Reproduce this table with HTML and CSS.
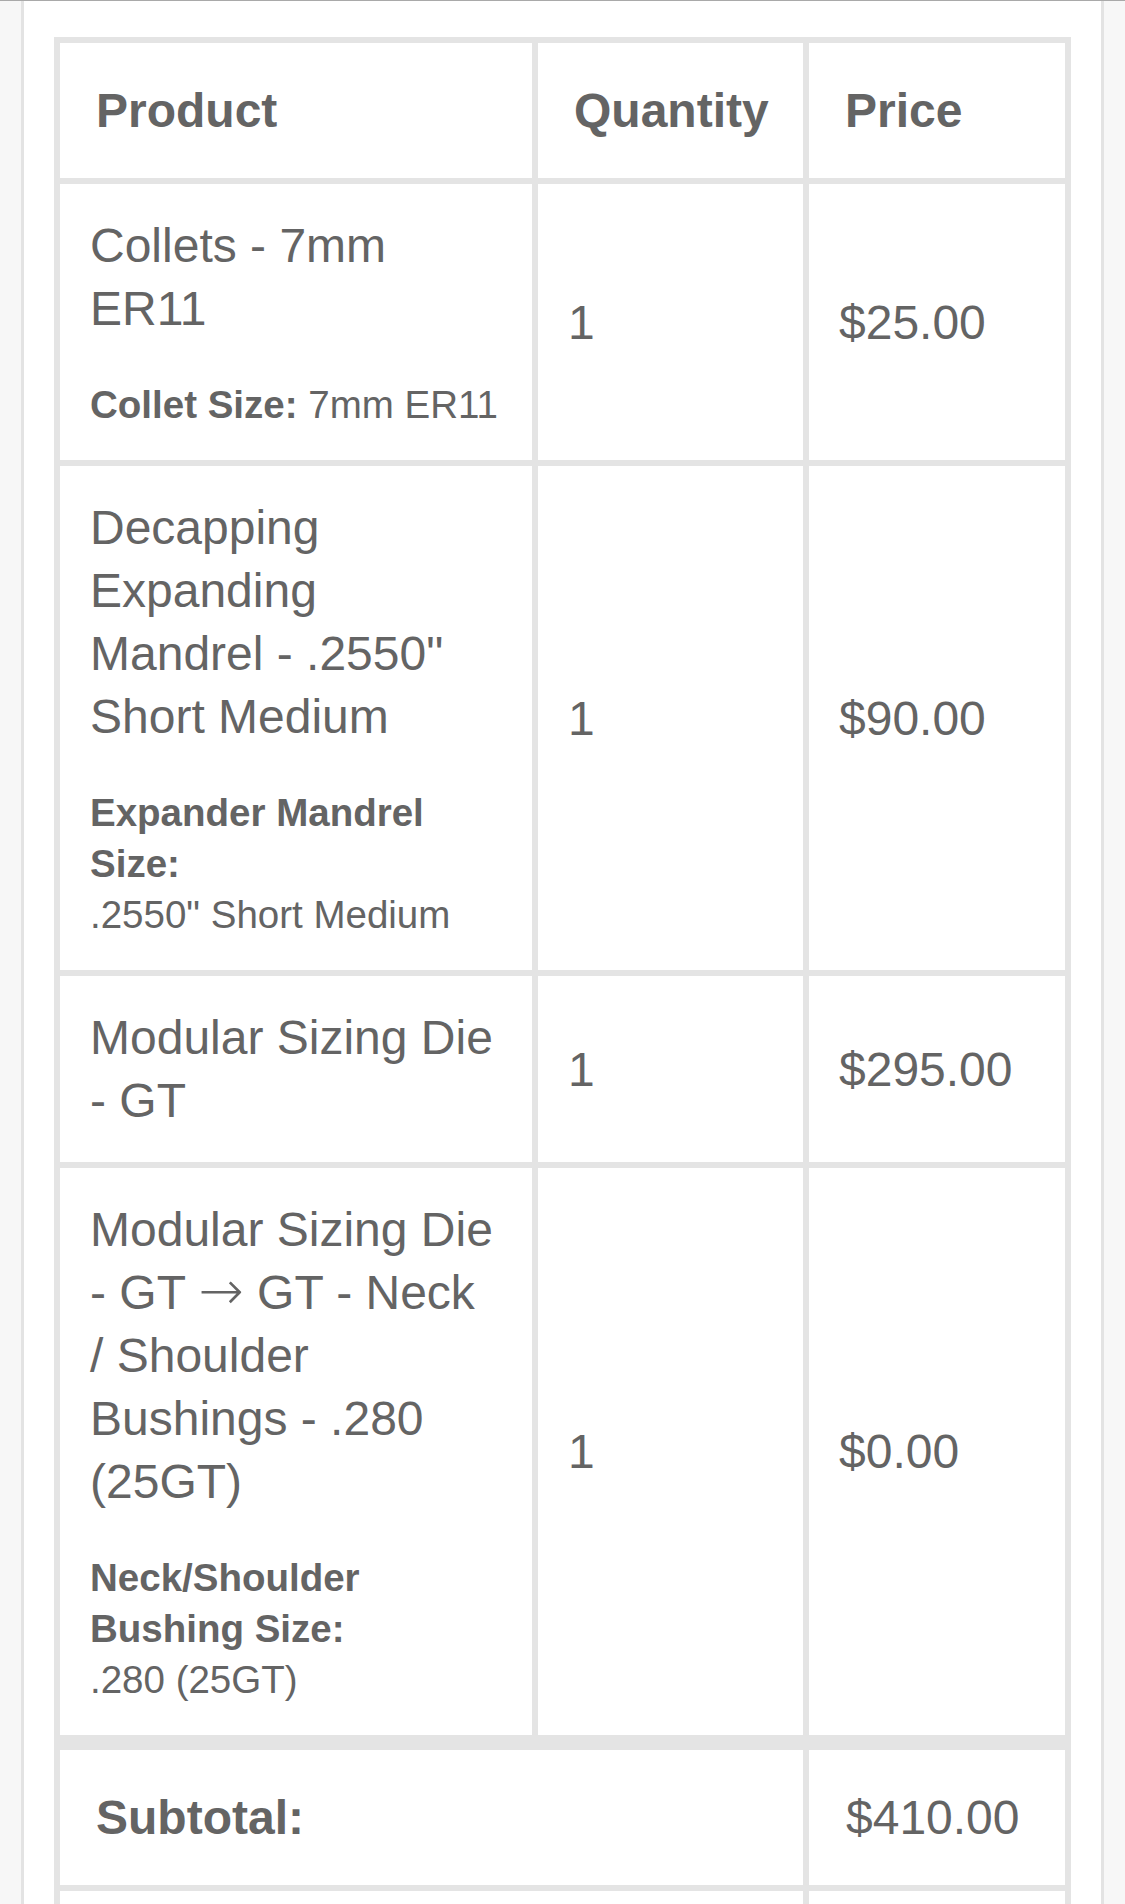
FILE: index.html
```html
<!DOCTYPE html>
<html lang="en">
<head>
<meta charset="utf-8">
<title>Order details</title>
<link rel="stylesheet" href="styles.css">
</head>
<body>
<div class="panel">
  <table class="order">
    <colgroup>
      <col class="c-product">
      <col class="c-qty">
      <col class="c-price">
    </colgroup>
    <thead>
      <tr>
        <th>Product</th>
        <th>Quantity</th>
        <th>Price</th>
      </tr>
    </thead>
    <tbody>
      <tr>
        <td class="product">
          <div class="name">Collets - 7mm ER11</div>
          <ul class="meta">
            <li><strong>Collet Size:</strong> <span class="val">7mm ER11</span></li>
          </ul>
        </td>
        <td class="num">1</td>
        <td class="num">$25.00</td>
      </tr>
      <tr>
        <td class="product">
          <div class="name">Decapping Expanding Mandrel - .2550" Short Medium</div>
          <ul class="meta">
            <li><strong>Expander Mandrel Size:</strong> <span class="val">.2550" Short Medium</span></li>
          </ul>
        </td>
        <td class="num">1</td>
        <td class="num">$90.00</td>
      </tr>
      <tr>
        <td class="product">
          <div class="name">Modular Sizing Die - GT</div>
        </td>
        <td class="num">1</td>
        <td class="num">$295.00</td>
      </tr>
      <tr>
        <td class="product">
          <div class="name">Modular Sizing Die - GT <span class="arrow">→</span> GT - Neck /&nbsp;Shoulder Bushings - .280 (25GT)</div>
          <ul class="meta">
            <li><strong>Neck/Shoulder Bushing Size:</strong> <span class="val">.280 (25GT)</span></li>
          </ul>
        </td>
        <td class="num">1</td>
        <td class="num">$0.00</td>
      </tr>
    </tbody>
    <tfoot>
      <tr class="first">
        <th colspan="2">Subtotal:</th>
        <td>$410.00</td>
      </tr>
      <tr class="next">
        <th colspan="2">&nbsp;</th>
        <td>&nbsp;</td>
      </tr>
    </tfoot>
  </table>
</div>
</body>
</html>
```
FILE: styles.css
```css
html, body {
  margin: 0;
  padding: 0;
}

body {
  background: #f7f7f7;
  border-top: 1px solid #a9a9a9;
  font-family: "Liberation Sans", Arial, Helvetica, sans-serif;
  color: #646464;
}

.panel {
  margin: 0 21px;
  background: #ffffff;
  border-left: 3px solid #e3e3e3;
  border-right: 3px solid #e3e3e3;
  padding: 36px 30px 60px;
}

.order {
  width: 100%;
  table-layout: fixed;
  border-collapse: separate;
  border-spacing: 0;
  border-top: 6px solid #e4e4e4;
  border-left: 6px solid #e4e4e4;
  font-size: 48px;
  line-height: 63px;
}

.c-product { width: 478px; }
.c-qty { width: 271px; }
.c-price { width: 262px; }

.order th,
.order td {
  border-right: 6px solid #e4e4e4;
  border-bottom: 6px solid #e4e4e4;
  text-align: left;
  vertical-align: middle;
}

.order th {
  font-weight: bold;
  padding: 36px 18px 36px 36px;
  white-space: nowrap;
}

.order td {
  font-weight: normal;
  padding: 30px 31px 30px 30px;
}

.order tfoot td {
  padding: 36px 18px 36px 37px;
}

.order tfoot tr.first th,
.order tfoot tr.first td {
  border-top: 9px solid #e4e4e4;
}

.arrow {
  font-family: "DejaVu Sans", sans-serif;
  font-size: 54px;
  font-weight: 200;
  line-height: 50px;
}

.meta {
  list-style: none;
  margin: 39px 0 0;
  padding: 0;
  font-size: 38.5px;
  line-height: 51px;
}

.meta strong {
  font-weight: bold;
}

.meta .val {
  display: inline-block;
}
```
